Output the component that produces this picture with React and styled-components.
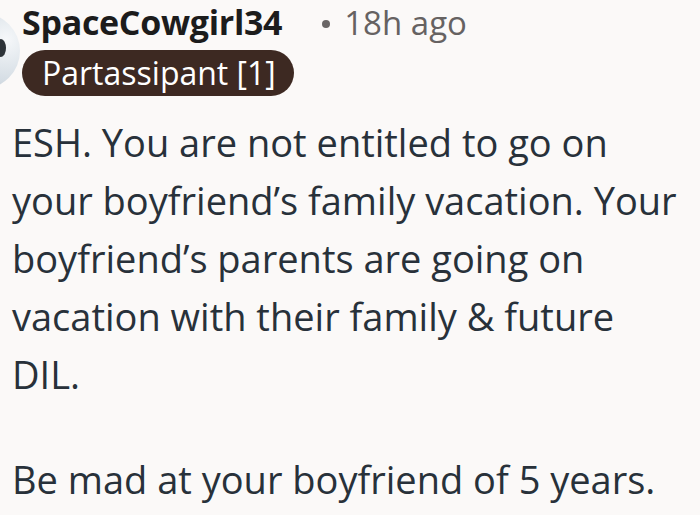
import styled, { createGlobalStyle } from "styled-components";

const Global = createGlobalStyle`
  html, body {
    margin: 0;
    padding: 0;
    background: #fbf9f8;
  }
  body {
    font-family: "Open Sans", "Noto Sans", sans-serif;
    overflow: hidden;
  }
`;

const Page = styled.div`
  width: 700px;
  height: 515px;
  overflow: hidden;
  background: #fbf9f8;
`;

const Header = styled.div`
  display: flex;
  align-items: flex-start;
  gap: 2px;
`;

const Avatar = styled.div`
  flex: none;
  width: 76px;
  height: 76px;
  margin: 13px 0 0 -56px;
  border-radius: 50%;
  background: radial-gradient(circle at 82% 35%, #f6f8fa 0%, #d6dee5 50%, #a7b5c0 100%);
  position: relative;
  &::after {
    content: "";
    position: absolute;
    right: 14px;
    top: 26px;
    width: 10px;
    height: 18px;
    border-radius: 50%;
    background: #2d3338;
  }
`;

const Meta = styled.div`
  display: flex;
  flex-direction: column;
  gap: 4px;
`;

const TopLine = styled.div`
  display: flex;
  align-items: baseline;
  height: 46px;
  margin-top: -2px;
`;

const Name = styled.span`
  font-size: 34px;
  font-weight: 700;
  color: #1c1c1c;
  letter-spacing: -0.3px;
  line-height: 48px;
`;

const Dot = styled.span`
  align-self: center;
  width: 8px;
  height: 8px;
  margin: 5px 14px 0 40px;
  border-radius: 50%;
  background: #6a6666;
`;

const Time = styled.span`
  font-size: 33px;
  line-height: 48px;
  color: #666262;
`;

const Badge = styled.span`
  align-self: flex-start;
  margin-top: 2px;
  background: #3d2922;
  color: #ffffff;
  font-size: 32px;
  line-height: 46px;
  padding: 0 18px 0 20px;
  border-radius: 23px;
`;

const Body = styled.div`
  padding: 17px 0 0 12px;
  color: #28313a;
  font-size: 38px;
  line-height: 58px;
`;

const Para = styled.p`
  margin: 0 0 47px;
  white-space: nowrap;
`;

const Line = styled.span`
  display: block;
`;

export default function App() {
  return (
    <Page>
      <Global />
      <Header>
        <Avatar />
        <Meta>
          <TopLine>
            <Name>SpaceCowgirl34</Name>
            <Dot />
            <Time>18h ago</Time>
          </TopLine>
          <Badge>Partassipant [1]</Badge>
        </Meta>
      </Header>
      <Body>
        <Para>
          <Line>ESH. You are not entitled to go on</Line>
          <Line>your boyfriend’s family vacation. Your</Line>
          <Line>boyfriend’s parents are going on</Line>
          <Line>vacation with their family &amp; future</Line>
          <Line>DIL.</Line>
        </Para>
        <Para>
          <Line>Be mad at your boyfriend of 5 years.</Line>
        </Para>
      </Body>
    </Page>
  );
}
